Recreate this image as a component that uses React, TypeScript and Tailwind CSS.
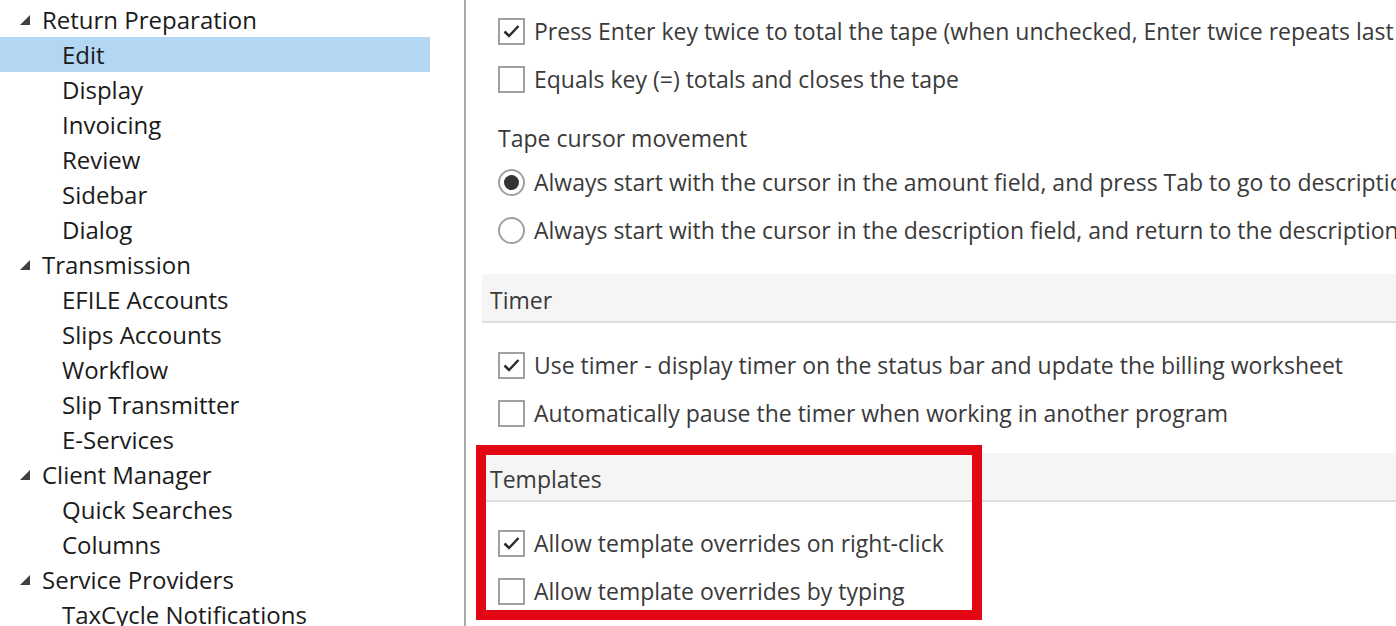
import React from 'react';

type TreeNode = { label: string; children: string[] };

const tree: TreeNode[] = [
  { label: 'Return Preparation', children: ['Edit', 'Display', 'Invoicing', 'Review', 'Sidebar', 'Dialog'] },
  { label: 'Transmission', children: ['EFILE Accounts', 'Slips Accounts', 'Workflow', 'Slip Transmitter', 'E-Services'] },
  { label: 'Client Manager', children: ['Quick Searches', 'Columns'] },
  { label: 'Service Providers', children: ['TaxCycle Notifications'] },
];

const font = { fontFamily: '"Open Sans", "Noto Sans", sans-serif' };

function Expander() {
  return (
    <svg width="10" height="10" viewBox="0 0 10 10" className="shrink-0">
      <polygon points="10,0 10,10 0,10" fill="#404040" />
    </svg>
  );
}

function Checkbox({ checked }: { checked?: boolean }) {
  return (
    <span className="flex h-[27px] w-[27px] shrink-0 items-center justify-center border-2 border-[#a0a0a0] bg-white">
      {checked && (
        <svg width="17" height="14" viewBox="0 0 17 14">
          <path d="M1.5 7.5 L6 12 L15.5 2" fill="none" stroke="#2b2b2b" strokeWidth="2.5" />
        </svg>
      )}
    </span>
  );
}

function Radio({ checked }: { checked?: boolean }) {
  return (
    <span className="flex h-[27px] w-[27px] shrink-0 items-center justify-center rounded-full border-2 border-[#a0a0a0] bg-white">
      {checked && <span className="h-[15px] w-[15px] rounded-full bg-[#333]" />}
    </span>
  );
}

function Option({ kind, checked, label }: { kind: 'check' | 'radio'; checked?: boolean; label: string }) {
  return (
    <div className="flex h-12 items-center gap-[9px] whitespace-nowrap pl-8">
      {kind === 'check' ? <Checkbox checked={checked} /> : <Radio checked={checked} />}
      <span>{label}</span>
    </div>
  );
}

function SectionHeader({ title }: { title: string }) {
  return (
    <div className="ml-4 flex h-[49px] items-center border-b-2 border-[#dedede] bg-[#f5f5f5] pl-2 pt-[5px]">
      {title}
    </div>
  );
}

export default function App() {
  return (
    <div className="flex h-[626px] w-[1396px] overflow-hidden bg-white" style={font}>
      <aside className="w-[464px] shrink-0 pt-[2px] text-[24px] text-[#1b1b1b]">
        {tree.map((node) => (
          <div key={node.label}>
            <div className="flex h-[35px] items-center gap-[12px] pl-5">
              <Expander />
              <span>{node.label}</span>
            </div>
            {node.children.map((child) => (
              <div
                key={child}
                className={`flex h-[35px] w-[430px] items-center pl-[62px] ${child === 'Edit' ? 'bg-[#b3d6f2]' : ''}`}
              >
                {child}
              </div>
            ))}
          </div>
        ))}
      </aside>

      <div className="w-[2px] shrink-0 bg-[#a8a8a8]" />

      <main className="relative min-w-0 flex-1 overflow-hidden pt-[7px] text-[23px] text-[#3a3a3a]">
        <Option kind="check" checked label="Press Enter key twice to total the tape (when unchecked, Enter twice repeats last row)" />
        <Option kind="check" label="Equals key (=) totals and closes the tape" />
        <div className="mt-[15px] flex h-10 items-center pl-8">Tape cursor movement</div>
        <Option kind="radio" checked label="Always start with the cursor in the amount field, and press Tab to go to description field" />
        <Option kind="radio" label="Always start with the cursor in the description field, and return to the description field" />

        <div className="mt-5">
          <SectionHeader title="Timer" />
        </div>
        <div className="mt-[18px]">
          <Option kind="check" checked label="Use timer - display timer on the status bar and update the billing worksheet" />
          <Option kind="check" label="Automatically pause the timer when working in another program" />
        </div>

        <div className="mt-[16px]">
          <SectionHeader title="Templates" />
        </div>
        <div className="mt-[17px]">
          <Option kind="check" checked label="Allow template overrides on right-click" />
          <Option kind="check" label="Allow template overrides by typing" />
        </div>

        {/* highlight frame drawn over the Templates group */}
        <div className="pointer-events-none absolute left-[10px] top-[445px] h-[175px] w-[506px] border-[10px] border-[#e30613]" />
      </main>
    </div>
  );
}
